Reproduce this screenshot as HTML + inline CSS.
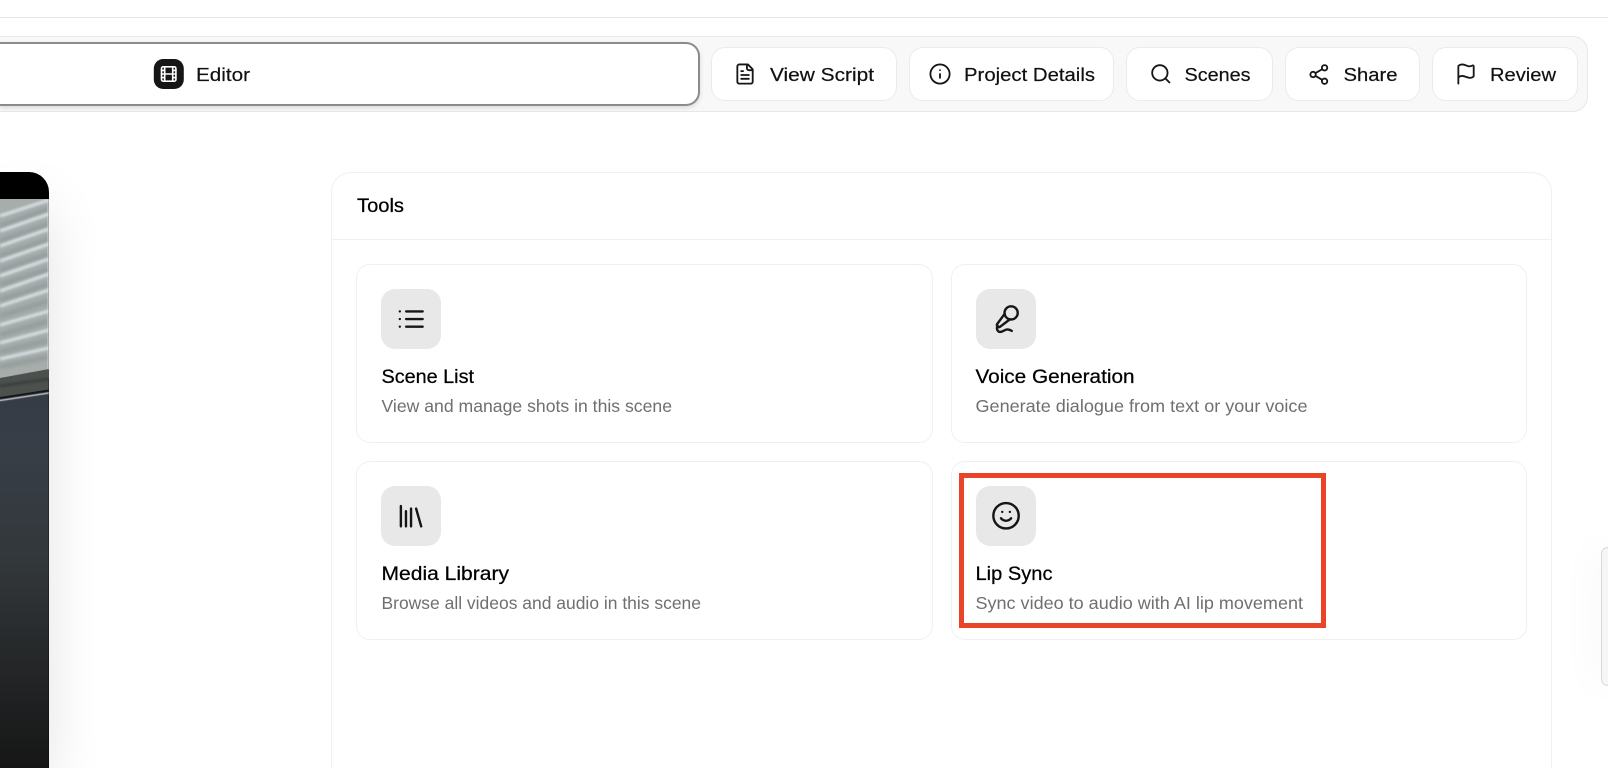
<!DOCTYPE html>
<html>
<head>
<meta charset="utf-8">
<title>Tools</title>
<style>
html,body{margin:0;padding:0;width:1608px;height:768px;background:#fff;overflow:hidden}
#root{position:relative;width:1608px;height:768px;overflow:hidden;background:#fff}
.a{position:absolute;box-sizing:border-box}
#topline{left:0;top:17px;width:1608px;height:1px;background:#e8e8e8}
#bar{left:0;top:36px;width:1587.5px;height:76px;background:#f8f8f8;border:1px solid #e8e8e8;border-left:0;border-radius:0 15px 15px 0}
#ed{left:0;top:41.5px;width:700px;height:64.5px;background:#fff;border:2px solid #8b8b8b;border-left:0;border-radius:0 14px 14px 0;box-shadow:0 2px 5px rgba(0,0,0,.12)}
.b{top:47px;height:53.5px;background:#fff;border:1px solid #ebebeb;border-radius:14px}
#video{left:0;top:172px;width:48.7px;height:596px;border-radius:0 20px 0 0;background:#000;box-shadow:0 25px 60px -12px rgba(0,0,0,.23)}
#panel{left:331px;top:172px;width:1221px;height:596px;background:#fff;border:1px solid #f0f0f0;border-bottom:0;border-radius:20px 20px 0 0}
#hline{left:331px;top:239px;width:1221px;height:1px;background:#f0f0f0}
.c{background:#fff;border:1px solid #f0f0f0;border-radius:14px;height:179px}
.t{width:60px;height:60px;background:#e8e8e8;border-radius:14px}
#red{left:959px;top:473px;width:367px;height:155px;border:5px solid #e94427}
#side{left:1601px;top:547px;width:7px;height:139px;background:#f6f6f6;border:1px solid #d8d8d8;border-right:0;border-radius:14px 0 0 14px;box-shadow:0 0 40px rgba(0,0,0,.1)}
svg{position:absolute;left:0;top:0;display:block}
text{font-family:"Liberation Sans",sans-serif}
.n{font-size:18.5px;fill:#111;stroke:#111;stroke-width:.2}
.h{font-size:19.5px;fill:#000;stroke:#000;stroke-width:.25}
.d{font-size:17.5px;fill:#6f6f6f}
.i{fill:none;stroke:#161616;stroke-width:1.9;stroke-linecap:round;stroke-linejoin:round}
.j{fill:none;stroke:#161616;stroke-width:1.9;stroke-linecap:round;stroke-linejoin:round}
</style>
</head>
<body>
<div id="root">
<div class="a" id="topline"></div>
<div class="a" id="bar"></div>
<div class="a" id="ed"></div>
<div class="a b" style="left:710.5px;width:186px"></div>
<div class="a b" style="left:908.5px;width:205.500px"></div>
<div class="a b" style="left:1125.5px;width:147.500px"></div>
<div class="a b" style="left:1284.5px;width:135px"></div>
<div class="a b" style="left:1431.5px;width:146px"></div>
<div class="a" id="side"></div>
<div class="a" id="panel"></div>
<div class="a" id="hline"></div>
<div class="a c" style="left:355.5px;top:264px;width:577px"></div>
<div class="a c" style="left:950.5px;top:264px;width:576px"></div>
<div class="a c" style="left:355.5px;top:461px;width:577px"></div>
<div class="a c" style="left:950.5px;top:461px;width:576px"></div>
<div class="a t" style="left:381px;top:289px"></div>
<div class="a t" style="left:976px;top:289px"></div>
<div class="a t" style="left:381px;top:486px"></div>
<div class="a t" style="left:976px;top:486px"></div>
<div class="a" id="video"></div>
<div class="a" id="red"></div>

<svg width="1608" height="768" viewBox="0 0 1608 768" xmlns="http://www.w3.org/2000/svg">
<defs>
<linearGradient id="dark" x1="0" y1="0" x2="0" y2="1">
<stop offset="0" stop-color="#363c45"/>
<stop offset=".15" stop-color="#383e47"/>
<stop offset=".45" stop-color="#32373a"/>
<stop offset=".75" stop-color="#232526"/>
<stop offset="1" stop-color="#161616"/>
</linearGradient>
<filter id="bl" x="-20%" y="-50%" width="140%" height="200%"><feGaussianBlur stdDeviation="1.600"/></filter>
<filter id="bs" x="-20%" y="-50%" width="140%" height="200%"><feGaussianBlur stdDeviation="1"/></filter>
<clipPath id="vc"><rect x="0" y="199" width="48.7" height="569"/></clipPath>
</defs>

<!-- video image -->
<g clip-path="url(#vc)">
<rect x="0" y="199" width="49" height="180" fill="#a6adab"/>
<g filter="url(#bl)" fill="none" stroke-width="5" stroke="#90979a" opacity=".7">
<path d="M0 226L49 209M0 241L49 224M0 256L49 239M0 270L49 254M0 285L49 269M0 300L49 284M0 316L49 301M0 335L49 321M0 352L49 340M0 367L49 357"/>
</g>
<g filter="url(#bs)" fill="none" stroke-width="3.400" stroke="#d3dce0">
<path d="M0 216L49 200M0 231L49 214M0 246L49 229M0 261L49 244M0 276L49 259M0 291L49 274M0 306L49 290M0 325L49 311M0 343L49 330M0 359L49 348"/>
</g>
<rect x="47.700" y="199" width="1" height="172" fill="#e6edf0"/>
<path d="M0 378L49 369V396L0 404Z" fill="#4c514e"/>
<path d="M0 386L49 379" stroke="#3b3f3d" stroke-width="3" filter="url(#bs)"/>
<path d="M0 398L49 390.500" stroke="#16181b" stroke-width="2"/>
<path d="M0 400.500L49 393" stroke="#a4acb4" stroke-width="1.400"/>
<path d="M0 402L49 394.500V768H0Z" fill="url(#dark)"/>
</g>

<!-- Toolbar icons -->
<rect x="153.800" y="59" width="30" height="30" rx="9.500" fill="#161616"/>
<g transform="translate(159.100 64.400) scale(.8)" fill="none" stroke="#fff" stroke-width="2" stroke-linecap="round" stroke-linejoin="round">
<rect x="3" y="3" width="18" height="18" rx="2"/><path d="M7 3v18M3 7.500h4M3 12h18M3 16.500h4M17 3v18M17 7.500h4M17 16.500h4"/>
</g>
<g class="i" transform="translate(733.500 62.500) scale(.96)">
<path d="M15 2H6a2 2 0 0 0-2 2v16a2 2 0 0 0 2 2h12a2 2 0 0 0 2-2V7Z"/><path d="M14 2v4a2 2 0 0 0 2 2h4"/><path d="M10 9H8M16 13H8M16 17H8"/>
</g>
<g class="i" transform="translate(928.500 62.500) scale(.96)">
<circle cx="12" cy="12" r="10"/><path d="M12 16v-4M12 8h.01"/>
</g>
<g class="i" transform="translate(1149.300 62.300) scale(.96)">
<circle cx="11" cy="11" r="8"/><path d="m21 21-4.340-4.340"/>
</g>
<g class="i" transform="translate(1307.300 63) scale(.96)">
<circle cx="18" cy="5" r="2.800"/><circle cx="6" cy="12" r="2.800"/><circle cx="18" cy="19" r="2.800"/><path d="m8.590 13.510 6.830 3.980M15.410 6.510l-6.820 3.980"/>
</g>
<g class="i" transform="translate(1454.500 62.500) scale(.96)">
<path d="M4 22V4a1 1 0 0 1 .4-.8A6 6 0 0 1 8 2c3 0 5 2 7.333 2q2 0 3.067-.8A1 1 0 0 1 20 4v10a1 1 0 0 1-.4.8A6 6 0 0 1 16 16c-3 0-5-2-8-2a6 6 0 0 0-4 1.528"/>
</g>

<!-- Toolbar text -->
<text class="n" x="196" y="81" textLength="54" lengthAdjust="spacingAndGlyphs">Editor</text>
<text class="n" x="770" y="81" textLength="104" lengthAdjust="spacingAndGlyphs">View Script</text>
<text class="n" x="964" y="81" textLength="131" lengthAdjust="spacingAndGlyphs">Project Details</text>
<text class="n" x="1184.500" y="81" textLength="66" lengthAdjust="spacingAndGlyphs">Scenes</text>
<text class="n" x="1343.500" y="81" textLength="54" lengthAdjust="spacingAndGlyphs">Share</text>
<text class="n" x="1490" y="81" textLength="66" lengthAdjust="spacingAndGlyphs">Review</text>

<text class="h" x="357" y="212" textLength="47" lengthAdjust="spacingAndGlyphs">Tools</text>

<!-- Card icons -->
<g class="j" transform="translate(396 303.800) scale(1.270)">
<path d="M3 6h.01M3 12h.01M3 18h.01M8 6h13M8 12h13M8 18h13"/>
</g>
<g class="j" transform="translate(990.800 304) scale(1.270)">
<path d="m11 7.601-5.994 8.19a1 1 0 0 0 .1 1.298l.817.818a1 1 0 0 0 1.314.087L15.090 12"/>
<path d="M16.500 21.174C15.500 20.500 14.372 20 13 20c-2.058 0-3.928 2.356-6 2-2.072-.356-2.775-3.369-1.500-4.500"/>
<circle cx="16" cy="7" r="5.200"/>
</g>
<g class="j" transform="translate(395.800 501) scale(1.270)">
<path d="m16 6 4 14M12 6v14M8 8v12M4 4v16"/>
</g>
<g class="j" transform="translate(990.800 500.500) scale(1.270)">
<circle cx="12" cy="12" r="10"/><path d="M8 14s1.500 2 4 2 4-2 4-2M9 9h.01M15 9h.01"/>
</g>

<!-- Card text -->
<text class="h" x="381.500" y="383" textLength="92.500" lengthAdjust="spacingAndGlyphs">Scene List</text>
<text class="d" x="381.500" y="412" textLength="290.500" lengthAdjust="spacingAndGlyphs">View and manage shots in this scene</text>
<text class="h" x="975.500" y="383" textLength="159" lengthAdjust="spacingAndGlyphs">Voice Generation</text>
<text class="d" x="975.500" y="412" textLength="332" lengthAdjust="spacingAndGlyphs">Generate dialogue from text or your voice</text>
<text class="h" x="381.500" y="580" textLength="127.500" lengthAdjust="spacingAndGlyphs">Media Library</text>
<text class="d" x="381.500" y="609" textLength="319.500" lengthAdjust="spacingAndGlyphs">Browse all videos and audio in this scene</text>
<text class="h" x="975.500" y="580" textLength="77" lengthAdjust="spacingAndGlyphs">Lip Sync</text>
<text class="d" x="975.500" y="609" textLength="327.500" lengthAdjust="spacingAndGlyphs">Sync video to audio with AI lip movement</text>
</svg>
</div>
</body>
</html>
